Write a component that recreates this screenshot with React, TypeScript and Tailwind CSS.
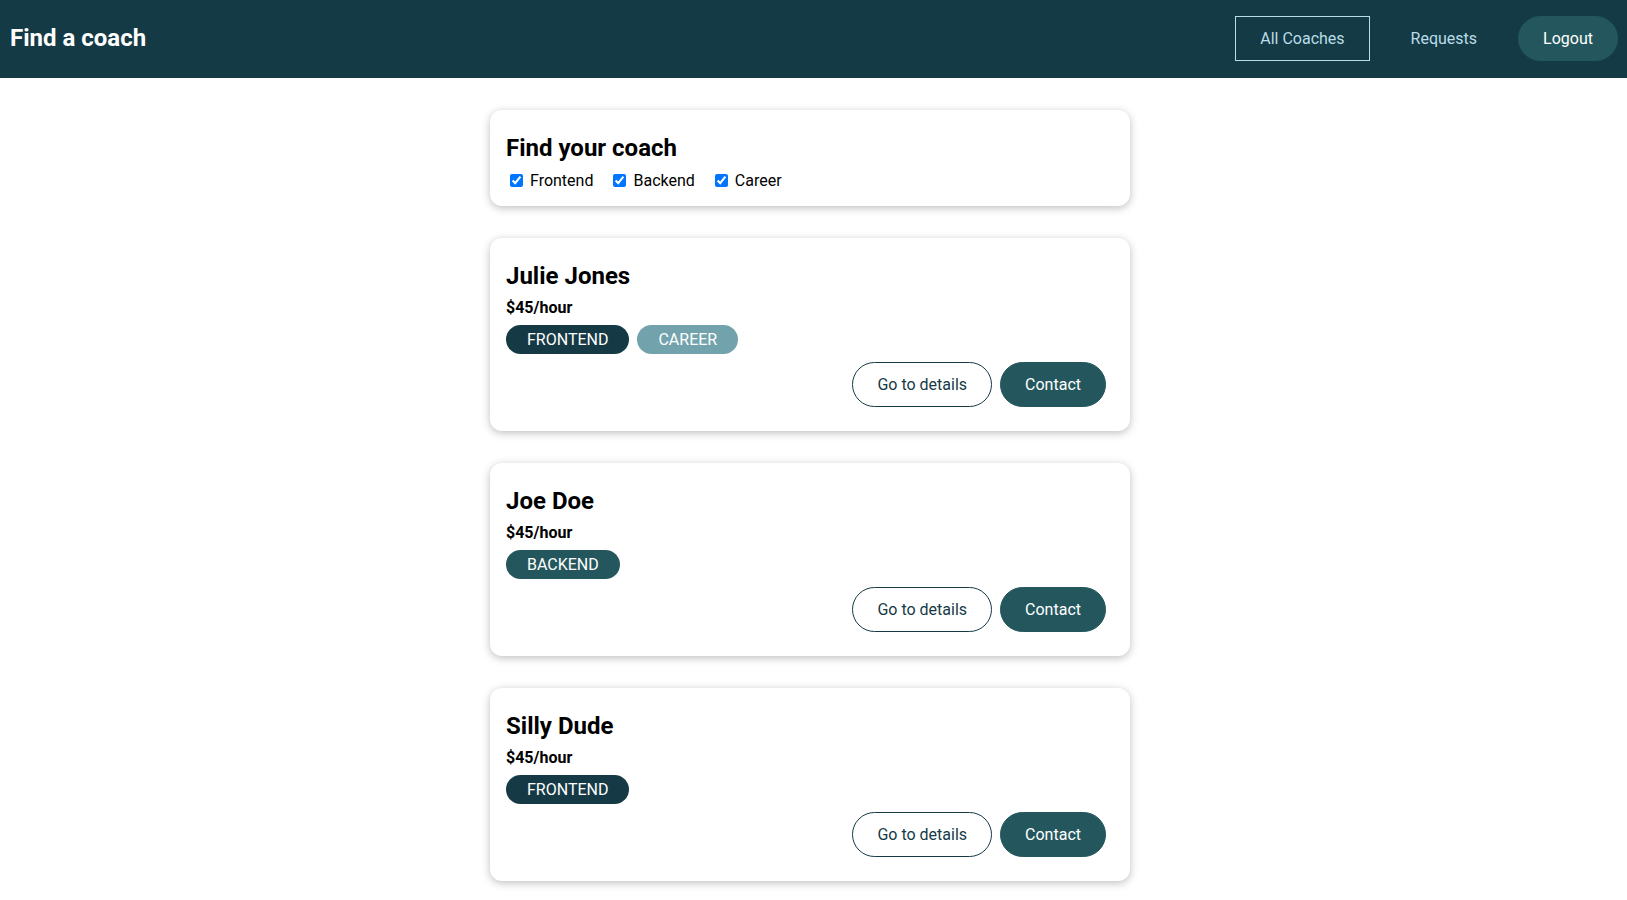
import React from 'react'

type Coach = {
  id: string
  name: string
  rate: number
  areas: string[]
}

const COACHES: Coach[] = [
  { id: 'c1', name: 'Julie Jones', rate: 45, areas: ['frontend', 'career'] },
  { id: 'c2', name: 'Joe Doe', rate: 45, areas: ['backend'] },
  { id: 'c3', name: 'Silly Dude', rate: 45, areas: ['frontend'] }
]

const BADGE_COLORS: Record<string, string> = {
  frontend: 'bg-[#153a46]',
  backend: 'bg-[#24575d]',
  career: 'bg-[#72a3ac]'
}

function Badge({ type }: { type: string }) {
  return (
    <span
      className={`${BADGE_COLORS[type]} mr-2 inline-block rounded-[30px] px-[21px] py-[5px] text-base leading-[19px] text-white uppercase`}
    >
      {type}
    </span>
  )
}

function Card({ children }: { children: React.ReactNode }) {
  return (
    <section className="mx-auto my-8 w-[640px] rounded-xl bg-white p-4 shadow-[0_2px_8px_rgba(0,0,0,0.26)]">
      {children}
    </section>
  )
}

function CoachItem({ coach }: { coach: Coach }) {
  return (
    <Card>
      <h3 className="my-2 text-2xl leading-7 font-bold">{coach.name}</h3>
      <h4 className="my-2 text-base leading-[19px] font-bold">
        ${coach.rate}/hour
      </h4>
      <div className="my-2 flex">
        {coach.areas.map((a) => (
          <Badge key={a} type={a} />
        ))}
      </div>
      <div className="my-2 flex justify-end">
        <button className="mr-2 rounded-[30px] border border-[#153a46] bg-white px-6 py-3 leading-[19px] text-[#153a46]">
          Go to details
        </button>
        <button className="mr-2 rounded-[30px] border border-[#24575d] bg-[#24575d] px-6 py-3 leading-[19px] text-white">
          Contact
        </button>
      </div>
    </Card>
  )
}

export default function App() {
  const filters = ['Frontend', 'Backend', 'Career']

  return (
    <div className="min-h-screen bg-white font-['Roboto',sans-serif] text-base text-black">
      <header className="flex h-[78px] w-full items-center justify-between bg-[#143a46] pr-[9px] pb-[2px] pl-[10px]">
        <h1 className="m-0 text-2xl font-bold text-white">Find a coach</h1>
        <ul className="flex items-center">
          <li className="mx-2">
            <a className="inline-block border border-[#b9dde6] px-6 py-3 leading-[19px] text-[#b9dde6]">
              All Coaches
            </a>
          </li>
          <li className="mx-2">
            <a className="inline-block border border-transparent px-6 py-3 leading-[19px] text-[#b9dde6]">
              Requests
            </a>
          </li>
          <li className="ml-2">
            <button className="rounded-[30px] border border-[#24575d] bg-[#24575d] px-6 py-3 leading-[19px] text-white">
              Logout
            </button>
          </li>
        </ul>
      </header>

      <main className="pr-[7px]">
        <Card>
          <h2 className="mt-2 mb-2 text-2xl leading-7 font-bold">
            Find your coach
          </h2>
          <div className="flex h-[20px] items-end leading-[19px]">
            {filters.map((f) => (
              <span key={f} className="mr-4 flex items-center">
                <input
                  type="checkbox"
                  id={f}
                  defaultChecked
                  className="mt-[3px] mr-[3px] mb-[3px] ml-1 h-[13px] w-[13px]"
                />
                <label htmlFor={f} className="ml-1">
                  {f}
                </label>
              </span>
            ))}
          </div>
        </Card>

        <ul>
          {COACHES.map((c) => (
            <li key={c.id}>
              <CoachItem coach={c} />
            </li>
          ))}
        </ul>
      </main>
    </div>
  )
}
